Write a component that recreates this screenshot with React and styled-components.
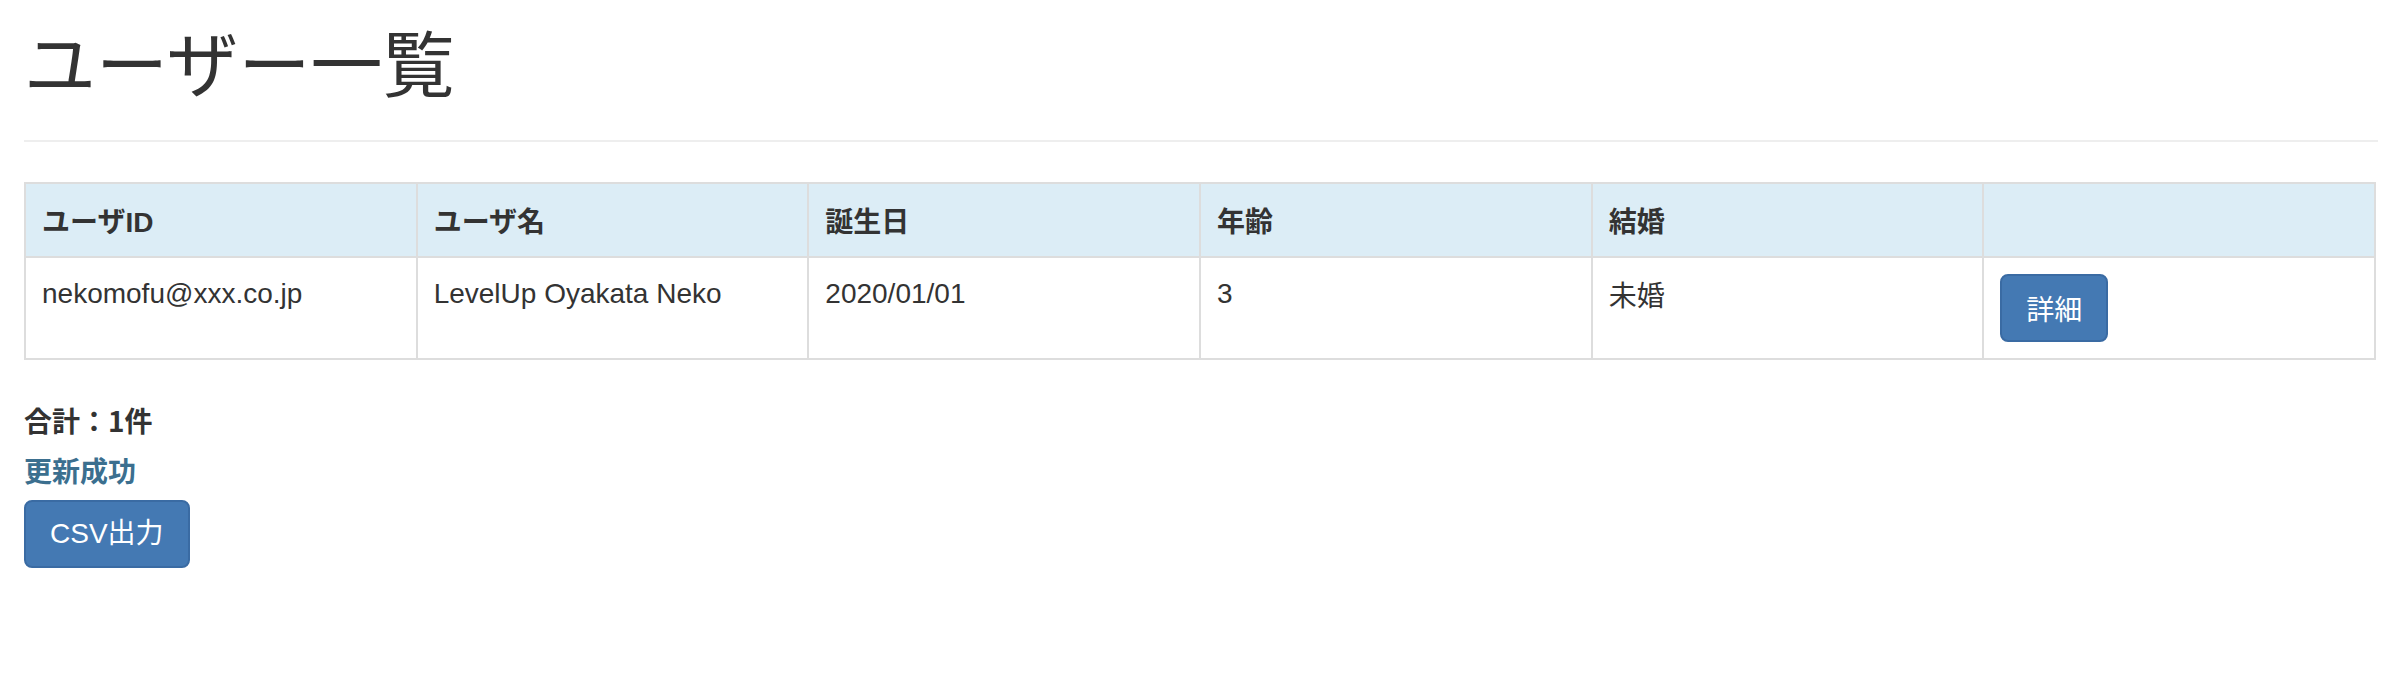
import React from "react";
import styled, { createGlobalStyle } from "styled-components";

const GlobalStyle = createGlobalStyle`
  html, body {
    margin: 0;
    padding: 0;
    background: #ffffff;
  }
  body {
    font-family: "Liberation Sans", "Noto Sans CJK JP", sans-serif;
    font-size: 28px;
    line-height: 40px;
    color: #333333;
  }
  * { box-sizing: border-box; }
`;

const jpFont = `"Noto Sans CJK JP", "Liberation Sans", sans-serif`;

const Page = styled.div`
  padding: 0 16px 0 24px;
`;

const Title = styled.h1`
  margin: 20px 0 0;
  font-family: ${jpFont};
  font-size: 72px;
  font-weight: 400;
  line-height: 80px;
  color: #333333;
`;

const Divider = styled.hr`
  margin: 40px 0 0;
  border: 0;
  border-top: 2px solid #eeeeee;
  height: 0;
`;

const Table = styled.table`
  margin: 40px 0 40px;
  width: calc(100% - 2px);
  table-layout: fixed;
  border-collapse: collapse;
  border: 2px solid #dddddd;
`;

const HeadRow = styled.tr`
  background: #dcedf6;
`;

const HeadCell = styled.th`
  padding: 16px;
  border: 2px solid #dddddd;
  text-align: left;
  vertical-align: top;
  font-family: ${jpFont};
  font-weight: 700;
  line-height: 40px;
`;

const Latin = styled.span`
  font-family: "Liberation Sans", sans-serif;
  line-height: 1;
`;

const Cell = styled.td`
  padding: 16px;
  border: 2px solid #dddddd;
  vertical-align: top;
  line-height: 40px;
  font-family: ${(p) => (p.$jp ? jpFont : `"Liberation Sans", "Noto Sans CJK JP", sans-serif`)};
`;

const Button = styled.button`
  display: inline-flex;
  align-items: center;
  justify-content: center;
  height: 68px;
  padding: 0 24px;
  margin: 0;
  border: 2px solid #3a6ba3;
  border-radius: 8px;
  background: #4479b3;
  color: #ffffff;
  font-family: ${(p) => (p.$jp ? jpFont : `"Liberation Sans", "Noto Sans CJK JP", sans-serif`)};
  font-size: 28px;
  font-weight: 400;
  line-height: 40px;
  cursor: pointer;
`;

const Summary = styled.div`
  font-family: ${jpFont};
  font-weight: 700;
  line-height: 40px;
  margin-bottom: 10px;
  color: ${(p) => p.$color || "#333333"};
`;

const columns = ["ユーザ", "ユーザ名", "誕生日", "年齢", "結婚", ""];

const users = [
  {
    id: "nekomofu@xxx.co.jp",
    name: "LevelUp Oyakata Neko",
    birthday: "2020/01/01",
    age: "3",
    married: "未婚",
  },
];

export default function App() {
  return (
    <>
      <GlobalStyle />
      <Page>
        <Title>ユーザー一覧</Title>
        <Divider />
        <Table>
          <thead>
            <HeadRow>
              {columns.map((c, i) => (
                <HeadCell key={i}>
                  {c}
                  {i === 0 && <Latin>ID</Latin>}
                </HeadCell>
              ))}
            </HeadRow>
          </thead>
          <tbody>
            {users.map((u) => (
              <tr key={u.id}>
                <Cell>{u.id}</Cell>
                <Cell>{u.name}</Cell>
                <Cell>{u.birthday}</Cell>
                <Cell>{u.age}</Cell>
                <Cell $jp>{u.married}</Cell>
                <Cell>
                  <Button $jp type="button">詳細</Button>
                </Cell>
              </tr>
            ))}
          </tbody>
        </Table>
        <Summary>合計：1件</Summary>
        <Summary $color="#3b6f8f">更新成功</Summary>
        <Button type="button">CSV出力</Button>
      </Page>
    </>
  );
}
